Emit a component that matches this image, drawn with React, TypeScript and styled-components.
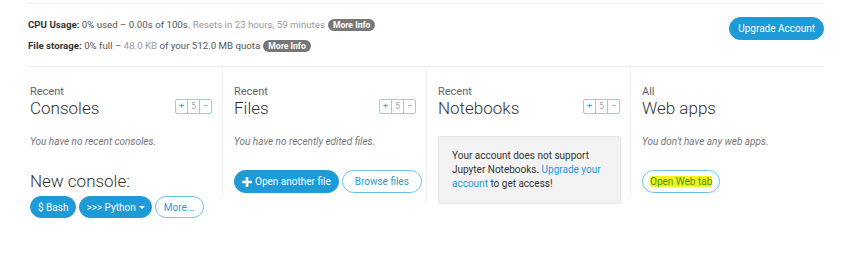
import React from "react";
import styled, { createGlobalStyle } from "styled-components";

const Global = createGlobalStyle`
  html, body { margin: 0; padding: 0; background: #fff; }
  body { font-family: Roboto, "Liberation Sans", Arial, sans-serif; color: #333; }
  * { box-sizing: border-box; }
`;

const BLUE = "#1e9ad6";

const Page = styled.div`
  padding: 3px 36px 0 28px;
  width: 860px;
`;

const StatusBar = styled.div`
  display: flex;
  justify-content: space-between;
  align-items: flex-start;
  border-top: 1px solid #efefef;
  border-bottom: 1px solid #efefef;
  height: 64px;
  padding-top: 10px;
`;

const InfoLines = styled.div`
  display: flex;
  flex-direction: column;
  font-size: 9.7px;
  line-height: 21px;
`;

const Label = styled.b`
  color: #333;
  font-weight: 700;
`;

const Val = styled.span<{ $light?: boolean }>`
  color: ${(p) => (p.$light ? "#9a9a9a" : "#555")};
`;

const Badge = styled.span`
  display: inline-block;
  background: #777;
  color: #fff;
  font-weight: 700;
  font-size: 8.6px;
  line-height: 12px;
  padding: 0 5px;
  border-radius: 7px;
  margin-left: 3px;
`;

const PillButton = styled.button<{ $outline?: boolean; $h?: number; $px?: number }>`
  font-family: Roboto, "Liberation Sans", Arial, sans-serif;
  font-size: 10px;
  height: ${(p) => p.$h ?? 22}px;
  padding: 0 ${(p) => p.$px ?? 8}px;
  margin: 0;
  border-radius: 12px;
  border: 1px solid ${(p) => (p.$outline ? "#6cc2ea" : BLUE)};
  background: ${(p) => (p.$outline ? "#fff" : BLUE)};
  color: ${(p) => (p.$outline ? "#2a9ad4" : "#fff")};
  display: inline-flex;
  align-items: center;
  gap: 3px;
  cursor: pointer;
  white-space: nowrap;
`;

const UpgradeButton = styled(PillButton)`
  margin-top: 3px;
  height: 23px;
`;

const Columns = styled.div`
  display: grid;
  grid-template-columns: repeat(4, 204px);
  margin-left: -10px;
  align-items: start;
`;

const Column = styled.div<{ $border?: boolean }>`
  padding: 18px 10px 0 11px;
  border-left: 1px solid ${(p) => (p.$border ? "#f0f0f0" : "transparent")};
  min-height: ${(p) => (p.$border ? 130 : 0)}px;
`;

const HeaderRow = styled.div`
  display: flex;
  justify-content: space-between;
  align-items: flex-end;
`;

const Titles = styled.div`
  display: flex;
  flex-direction: column;
`;

const Small = styled.div`
  font-size: 11px;
  color: #666;
  line-height: 13px;
`;

const Big = styled.div`
  font-size: 17px;
  font-weight: 300;
  color: #333;
  line-height: 20px;
`;

const Pager = styled.div`
  display: flex;
  margin-bottom: 4px;
`;

const PagerCell = styled.span<{ $num?: boolean }>`
  width: 13px;
  height: 15px;
  border: 1px solid #8ed0ee;
  margin-left: -1px;
  font-size: 9px;
  line-height: 13px;
  text-align: center;
  color: ${(p) => (p.$num ? "#aaa" : "#3aa4dc")};
  &:first-child { border-radius: 2px 0 0 2px; margin-left: 0; }
  &:last-child { border-radius: 0 2px 2px 0; }
`;

const Empty = styled.div`
  font-size: 10px;
  font-style: italic;
  color: #777;
  margin-top: 18px;
  line-height: 12px;
`;

const ButtonRow = styled.div<{ $mt: number }>`
  display: flex;
  gap: 3px;
  margin-top: ${(p) => p.$mt}px;
`;

const NewConsole = styled(Big)`
  margin-top: 23px;
`;

const NoticeBox = styled.div`
  margin-top: 18px;
  background: #f3f3f3;
  border: 1px solid #e3e3e3;
  border-radius: 3px;
  padding: 12px 10px 12px 13px;
  font-size: 10px;
  line-height: 14px;
  color: #333;
  height: 68px;
  width: 183px;
`;

const Link = styled.a`
  color: ${BLUE};
  text-decoration: none;
`;

const Highlight = styled.span`
  background: #f2f21c;
  color: #3c9a28;
  border-radius: 2px;
`;

const Caret = () => (
  <svg width="6" height="3" viewBox="0 0 6 3">
    <path d="M0 0h6L3 3z" fill="#fff" />
  </svg>
);

const Plus = () => (
  <svg width="10" height="10" viewBox="0 0 10 10">
    <path d="M3.7 0h2.6v3.7H10v2.6H6.3V10H3.7V6.3H0V3.7h3.7z" fill="#fff" />
  </svg>
);

const PagerWidget = () => (
  <Pager>
    <PagerCell>+</PagerCell>
    <PagerCell $num>5</PagerCell>
    <PagerCell>−</PagerCell>
  </Pager>
);

export default function App() {
  return (
    <>
      <Global />
      <Page>
        <StatusBar>
          <InfoLines>
            <div>
              <Label>CPU Usage:</Label> <Val>0% used – 0.00s of 100s.</Val>{" "}
              <Val $light>Resets in 23 hours, 59 minutes</Val>
              <Badge>More Info</Badge>
            </div>
            <div>
              <Label>File storage:</Label> <Val>0% full – </Val>
              <Val $light>48.0 KB</Val> <Val>of your 512.0 MB quota</Val>
              <Badge>More Info</Badge>
            </div>
          </InfoLines>
          <UpgradeButton>Upgrade Account</UpgradeButton>
        </StatusBar>
        <Columns>
          <Column>
            <HeaderRow>
              <Titles>
                <Small>Recent</Small>
                <Big>Consoles</Big>
              </Titles>
              <PagerWidget />
            </HeaderRow>
            <Empty>You have no recent consoles.</Empty>
            <NewConsole>New console:</NewConsole>
            <ButtonRow $mt={5}>
              <PillButton $px={7}>$ Bash</PillButton>
              <PillButton $px={6}>
                &gt;&gt;&gt; Python <Caret />
              </PillButton>
              <PillButton $outline>More...</PillButton>
            </ButtonRow>
          </Column>
          <Column $border>
            <HeaderRow>
              <Titles>
                <Small>Recent</Small>
                <Big>Files</Big>
              </Titles>
              <PagerWidget />
            </HeaderRow>
            <Empty>You have no recently edited files.</Empty>
            <ButtonRow $mt={22}>
              <PillButton $h={23} $px={7}>
                <Plus /> Open another file
              </PillButton>
              <PillButton $outline $h={23} $px={12}>
                Browse files
              </PillButton>
            </ButtonRow>
          </Column>
          <Column $border>
            <HeaderRow>
              <Titles>
                <Small>Recent</Small>
                <Big>Notebooks</Big>
              </Titles>
              <PagerWidget />
            </HeaderRow>
            <NoticeBox>
              Your account does not support Jupyter Notebooks.{" "}
              <Link href="#">Upgrade your account</Link> to get access!
            </NoticeBox>
          </Column>
          <Column $border>
            <Titles>
              <Small>All</Small>
              <Big>Web apps</Big>
            </Titles>
            <Empty>You don't have any web apps.</Empty>
            <ButtonRow $mt={22}>
              <PillButton $outline $h={23} $px={7}>
                <Highlight>Open Web tab</Highlight>
              </PillButton>
            </ButtonRow>
          </Column>
        </Columns>
      </Page>
    </>
  );
}
